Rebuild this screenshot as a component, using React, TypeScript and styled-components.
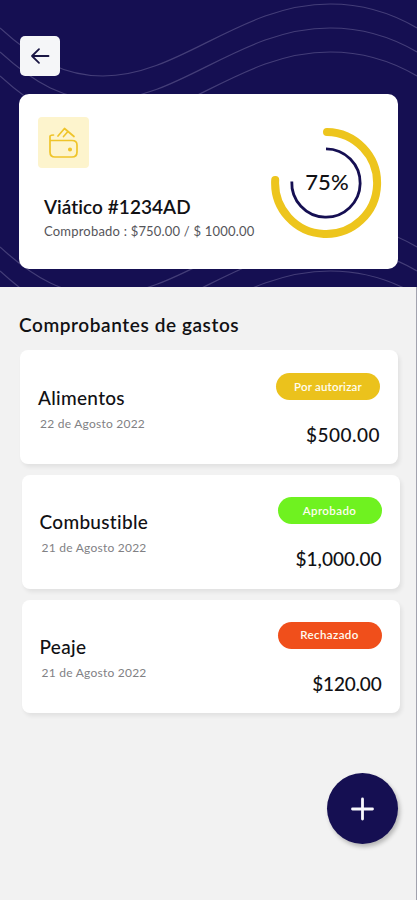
import React from "react";
import styled, { createGlobalStyle } from "styled-components";

const GlobalStyle = createGlobalStyle`
  * { box-sizing: border-box; }
  body { margin: 0; background: #f2f2f2; }
`;

const Screen = styled.div`
  width: 417px;
  height: 900px;
  display: flex;
  flex-direction: column;
  background: #f2f2f2;
  font-family: "Lato", sans-serif;
  font-variant-ligatures: none;
  color: #111114;
  overflow: hidden;
`;

const Header = styled.header`
  position: relative;
  height: 287px;
  flex: none;
  display: flex;
  flex-direction: column;
  align-items: flex-start;
  gap: 18px;
  padding: 36px 19px 0;
  background: #150f52;
`;

const Waves = styled.svg`
  position: absolute;
  inset: 0;
`;

const BackButton = styled.button`
  position: relative;
  width: 40px;
  height: 40px;
  padding: 0;
  border: 0;
  border-radius: 5px;
  margin-left: 1px;
  display: grid;
  place-items: center;
  background: #f5f6f8;
`;

const Summary = styled.section`
  position: relative;
  width: 379px;
  height: 175px;
  display: flex;
  justify-content: space-between;
  padding: 23px 16px 0 19px;
  border-radius: 10px;
  background: #fff;
`;

const SummaryInfo = styled.div`
  display: flex;
  flex-direction: column;
`;

const WalletTile = styled.div`
  width: 51px;
  height: 51px;
  display: grid;
  place-items: center;
  border-radius: 4px;
  background: #fdf4cd;
`;

const Line = styled.div<{ $size: number; $weight?: number; $track?: number }>`
  font-size: ${(p) => p.$size}px;
  font-weight: ${(p) => p.$weight ?? 500};
  letter-spacing: ${(p) => p.$track ?? 0}px;
  line-height: 24px;
  white-space: nowrap;
`;

const SummaryTitle = styled(Line)`
  margin: 27px 0 0 6px;
`;

const SummaryNote = styled(Line)`
  margin-left: 6px;
  color: #55555a;
`;

const Progress = styled.div`
  width: 112px;
  height: 112px;
  margin-top: 10px;
  display: grid;
  place-items: center;
  > * { grid-area: 1 / 1; }
`;

const Percent = styled(Line)`
  padding: 0 0 2px 2px;
`;

const Body = styled.main`
  flex: 1;
  display: flex;
  flex-direction: column;
  padding: 26px 0 0 19px;
  border-right: 1px solid #a2a3ae;
`;

const Rows = styled.div`
  display: flex;
  flex-direction: column;
  gap: 11px;
  margin: 13px 0 0 1px;
`;

const Row = styled.article<{ $shift?: boolean }>`
  width: 378px;
  height: ${(p) => (p.$shift ? 113.5 : 114)}px;
  margin-left: ${(p) => (p.$shift ? 1.5 : 0)}px;
  display: flex;
  justify-content: space-between;
  padding: ${(p) => (p.$shift ? 22 : 23)}px 18px 0 18px;
  border-radius: 8px;
  background: #fff;
  box-shadow: 2px 3px 4px rgba(0, 0, 0, 0.07);
`;

const RowText = styled.div`
  display: flex;
  flex-direction: column;
  padding-top: 13px;
`;

const RowDate = styled(Line)`
  margin: 2px 0 0 2px;
  color: #818184;
`;

const RowSide = styled.div`
  display: flex;
  flex-direction: column;
  align-items: flex-end;
  gap: 23px;
`;

const Badge = styled.div<{ $color: string }>`
  width: 104px;
  height: 27px;
  display: grid;
  place-items: center;
  border-radius: 14px;
  color: #fffdf0;
  background: ${(p) => p.$color};
`;

const AddButton = styled.button`
  width: 71px;
  height: 71px;
  padding: 0;
  border: 0;
  border-radius: 50%;
  margin: auto 18px 56px auto;
  display: grid;
  place-items: center;
  background: #150f52;
  box-shadow: 2px 3px 4px rgba(0, 0, 0, 0.25);
`;

const wave =
  "M0 28C35 60 65 76 103 76C180 76 240 4 330 4C365 4 395 15 417 28";

const expenses = [
  { name: "Alimentos", date: "22 de Agosto 2022", status: "Por autorizar", badgeTrack: 0.2, color: "#ebc21c", amount: "$500.00", amountTrack: 0.5 },
  { name: "Combustible", date: "21 de Agosto 2022", status: "Aprobado", badgeTrack: 0.4, color: "#6ff220", amount: "$1,000.00", amountTrack: 0 },
  { name: "Peaje", date: "21 de Agosto 2022", status: "Rechazado", badgeTrack: 0.4, color: "#f04f1b", amount: "$120.00", amountTrack: -0.2 },
];

export default function App() {
  return (
    <Screen>
      <GlobalStyle />
      <Header>
        <Waves width="417" height="287" fill="none" stroke="#443e78" strokeWidth="1.2">
          {[0, 24, 48, 219, 243, 267].map((y) => (
            <path key={y} d={wave} transform={`translate(0 ${y})`} />
          ))}
        </Waves>
        <BackButton aria-label="Volver">
          <svg width="20" height="18" viewBox="0 0 20 18" fill="none" stroke="#1a1644" strokeWidth="1.8" strokeLinecap="round" strokeLinejoin="round">
            <path d="M18.500 9H2M9 2.200L2 9L9 15.800" />
          </svg>
        </BackButton>
        <Summary>
          <SummaryInfo>
            <WalletTile>
              <svg width="51" height="51" viewBox="0 0 51 51" fill="none" stroke="#efc42a" strokeWidth="1.7" strokeLinecap="round" strokeLinejoin="round">
                <path d="M12 19V35Q12 40 17 40H34Q39 40 39 35V28Q39 23.5 34 23.5H12.5M12 19Q13 18 15.500 18" />
                <path d="M20 19L26.500 11.500L36 19.500M25.500 19.500L29.500 15" />
                <circle cx="32" cy="32.500" r="1.2" fill="#efc42a" />
              </svg>
            </WalletTile>
            <SummaryTitle $size={19} $weight={600} $track={0.05}>Viático #1234AD</SummaryTitle>
            <SummaryNote $size={13} $weight={400} $track={0.2}>Comprobado : $750.00 / $ 1000.00</SummaryNote>
          </SummaryInfo>
          <Progress>
            <svg width="112" height="112" viewBox="0 0 112 112" fill="none">
              <path d="M57 5A51 51 0 1 1 5.200 53" stroke="#edc51d" strokeWidth="8" strokeLinecap="round" />
              <path d="M56 21.800A34.200 34.200 0 1 1 21.800 54.500" stroke="#150f52" strokeWidth="2.8" />
            </svg>
            <Percent $size={22}>75%</Percent>
          </Progress>
        </Summary>
      </Header>
      <Body>
        <Line $size={19} $weight={600} $track={0.58}>Comprobantes de gastos</Line>
        <Rows>
          {expenses.map((e, i) => (
            <Row key={e.name} $shift={i > 0}>
              <RowText>
                <Line $size={19} $track={0.3}>{e.name}</Line>
                <RowDate $size={12} $weight={400} $track={0.24}>{e.date}</RowDate>
              </RowText>
              <RowSide>
                <Badge $color={e.color}>
                  <Line $size={11.5} $weight={600} $track={e.badgeTrack}>{e.status}</Line>
                </Badge>
                <Line $size={19} $track={e.amountTrack}>{e.amount}</Line>
              </RowSide>
            </Row>
          ))}
        </Rows>
        <AddButton aria-label="Agregar">
          <svg width="24" height="24" viewBox="0 0 24 24" stroke="#f8f8fc" strokeWidth="2.8" strokeLinecap="round">
            <path d="M11.500 2V22M1.500 12H21.500" />
          </svg>
        </AddButton>
      </Body>
    </Screen>
  );
}
